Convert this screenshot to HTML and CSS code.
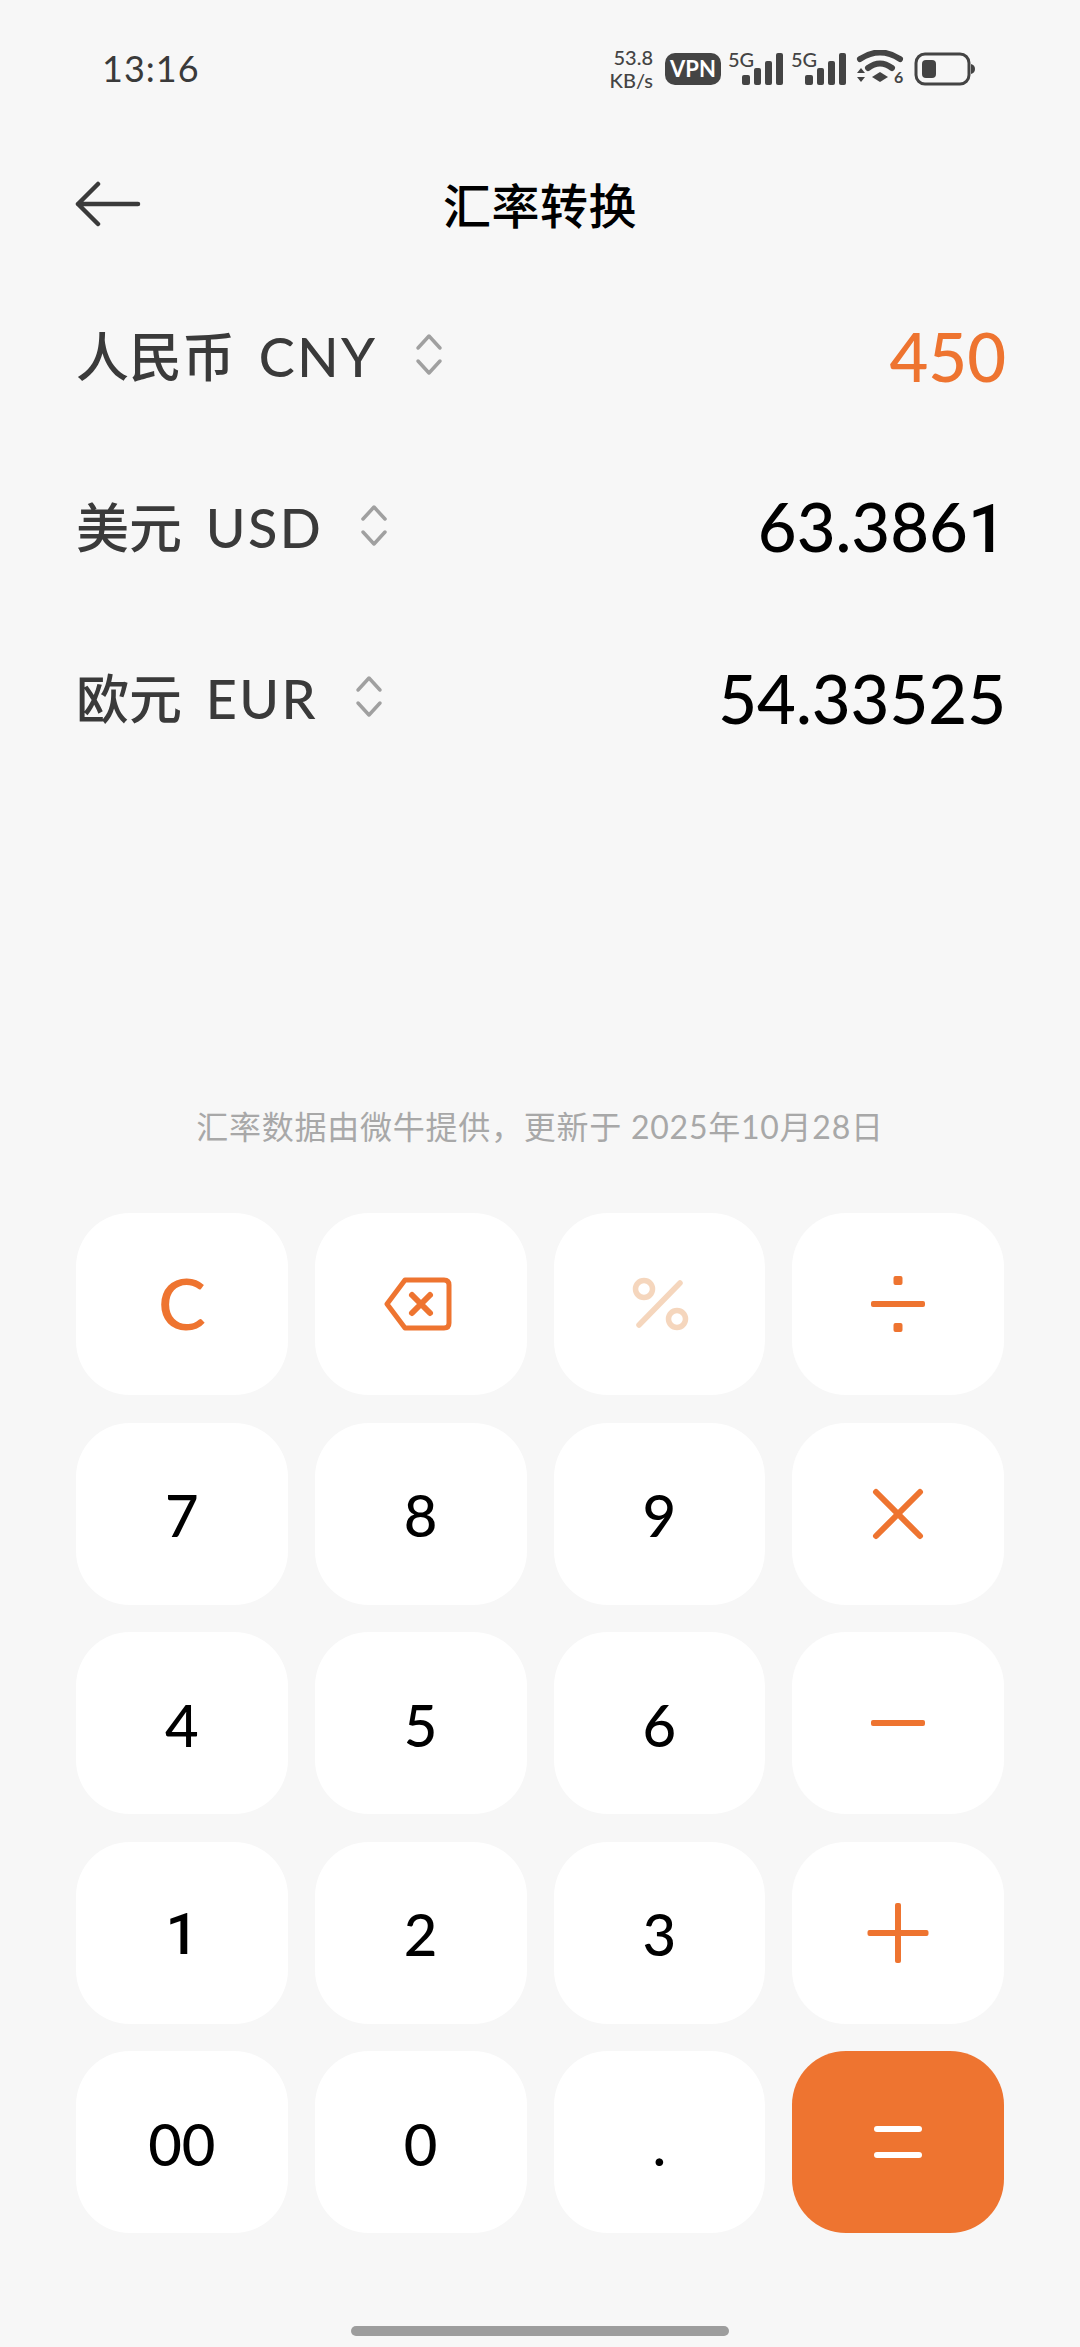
FILE: index.html
```html
<!DOCTYPE html>
<html lang="zh-CN">
<head>
<meta charset="UTF-8" />
<meta name="viewport" content="width=device-width, initial-scale=1.0"/>
<title>汇率转换</title>
<link rel="stylesheet" href="styles.css">
</head>
<body>

<div class="status-bar">
    <span class="time">13:16</span>
    <div class="status-icons">
        <div class="speed"><span>53.8</span><span>KB/s</span></div>
        <span class="vpn">VPN</span>
        <svg class="signal" width="56" height="44" viewBox="0 -6 56 44">
            <text class="signal-label" x="0" y="14">5G</text>
            <rect x="14" y="22" width="8" height="10" rx="2"/>
            <rect x="26" y="15" width="7" height="17" rx="2"/>
            <rect x="37" y="8" width="7" height="24" rx="2"/>
            <rect x="48" y="0" width="7" height="32" rx="2"/>
        </svg>
        <svg class="signal" width="56" height="44" viewBox="0 -6 56 44">
            <text class="signal-label" x="0" y="14">5G</text>
            <rect x="14" y="22" width="8" height="10" rx="2"/>
            <rect x="26" y="15" width="7" height="17" rx="2"/>
            <rect x="37" y="8" width="7" height="24" rx="2"/>
            <rect x="48" y="0" width="7" height="32" rx="2"/>
        </svg>
        <svg class="wifi" width="48" height="38" viewBox="0 0 48 38">
            <path d="M4 9 Q24 -4 44 9" fill="none" stroke="#444" stroke-width="6" stroke-linecap="round"/>
            <path d="M12 18 Q24 9 36 18" fill="none" stroke="#444" stroke-width="6" stroke-linecap="round"/>
            <path d="M16 27 L24 22 L32 27 L24 32 Z" fill="#444"/>
            <path d="M1 23 L5 18 L9 23 Z M1 27 L9 27 L5 32 Z" fill="#444"/>
            <text class="wifi-label" x="38" y="33">6</text>
        </svg>
        <svg class="battery" width="62" height="34" viewBox="0 0 62 34">
            <rect x="2" y="2" width="53" height="30" rx="9" fill="none" stroke="#444" stroke-width="3"/>
            <rect x="8" y="8" width="14" height="18" rx="4" fill="#444"/>
            <path d="M57 12 Q61 13 61 17 Q61 21 57 22 Z" fill="#444"/>
        </svg>
    </div>
</div>

<div class="header">
    <svg class="back" width="66" height="46" viewBox="0 0 66 46">
        <path d="M23 3 L3 23 L23 43 M3 23 H63"/>
    </svg>
    <h1>汇率转换</h1>
</div>

<div class="rates">
    <div class="rate-row">
        <div class="currency"><span><span class="name">人民币</span> <span class="code">CNY</span></span>
            <svg class="updown" width="28" height="44" viewBox="0 0 28 44"><path d="M3 16 L14 4 L25 16 M3 29 L14 41 L25 29"/></svg>
        </div>
        <span class="value active">450</span>
    </div>
    <div class="rate-row">
        <div class="currency"><span><span class="name">美元</span> <span class="code">USD</span></span>
            <svg class="updown" width="28" height="44" viewBox="0 0 28 44"><path d="M3 16 L14 4 L25 16 M3 29 L14 41 L25 29"/></svg>
        </div>
        <span class="value">63.386<span class="one">1</span></span>
    </div>
    <div class="rate-row">
        <div class="currency"><span><span class="name">欧元</span> <span class="code">EUR</span></span>
            <svg class="updown" width="28" height="44" viewBox="0 0 28 44"><path d="M3 16 L14 4 L25 16 M3 29 L14 41 L25 29"/></svg>
        </div>
        <span class="value">54.33525</span>
    </div>
</div>

<p class="note">汇率数据由微牛提供，更新于 2025年10月28日</p>

<div class="keypad">
    <button class="key op">C</button>
    <button class="key">
        <svg class="ico back-key" width="68" height="54" viewBox="0 0 68 54">
            <path d="M21 3 H60 Q65 3 65 8 V46 Q65 51 60 51 H21 L3 27 Z"/>
            <path d="M28 18 L46 36 M46 18 L28 36" stroke-width="6"/>
        </svg>
    </button>
    <button class="key">
        <svg class="ico pct" width="60" height="54" viewBox="0 0 60 54">
            <circle cx="13" cy="12" r="8.5"/>
            <circle cx="46" cy="42" r="8.5"/>
            <path d="M49 6 L8 48"/>
        </svg>
    </button>
    <button class="key">
        <svg class="ico" width="56" height="56" viewBox="0 0 56 56">
            <rect class="solid" x="1" y="25" width="54" height="6" rx="2"/>
            <rect class="solid" x="23.500" y="0" width="9" height="9" rx="2"/>
            <rect class="solid" x="23.500" y="47" width="9" height="9" rx="2"/>
        </svg>
    </button>

    <button class="key digit">7</button>
    <button class="key digit">8</button>
    <button class="key digit">9</button>
    <button class="key">
        <svg class="ico times" width="52" height="52" viewBox="0 0 52 52"><path d="M4 4 L48 48 M48 4 L4 48"/></svg>
    </button>

    <button class="key digit">4</button>
    <button class="key digit">5</button>
    <button class="key digit">6</button>
    <button class="key">
        <svg class="ico" width="56" height="8" viewBox="0 0 56 8"><rect class="solid" x="1" y="1" width="54" height="6" rx="2"/></svg>
    </button>

    <button class="key digit one">1</button>
    <button class="key digit">2</button>
    <button class="key digit">3</button>
    <button class="key">
        <svg class="ico" width="62" height="62" viewBox="0 0 62 62">
            <rect class="solid" x="0.500" y="28" width="61" height="6" rx="2"/>
            <rect class="solid" x="28" y="1" width="6" height="60" rx="2"/>
        </svg>
    </button>

    <button class="key digit">00</button>
    <button class="key digit">0</button>
    <button class="key digit">.</button>
    <button class="key equals">
        <svg class="ico" width="50" height="34" viewBox="0 0 50 34">
            <rect class="solid" x="1" y="1" width="48" height="6" rx="3"/>
            <rect class="solid" x="1" y="27" width="48" height="6" rx="3"/>
        </svg>
    </button>
</div>

<div class="home-bar"></div>

</body>
</html>
```

FILE: styles.css
```css
:root {
    --bg-color: #f7f7f7;
    --orange: #ee7430;
    --dark: #3a3a3a;
    --icon: #444;
    --latin: Lato, "Noto Sans CJK SC", sans-serif;
}

* {
    box-sizing: border-box;
}

body {
    margin: 0;
    height: 2347px;
    overflow: hidden;
    background: var(--bg-color);
    color: #000;
    font-family: var(--latin);
}

/* Status bar */
.status-bar {
    display: flex;
    align-items: center;
    justify-content: space-between;
    height: 138px;
    padding: 0 104px 0 102px;
}

.time {
    font-size: 36px;
    letter-spacing: 1px;
    color: var(--dark);
    padding-bottom: 2px;
}

.status-icons {
    display: flex;
    align-items: center;
    gap: 7px;
}

.speed {
    display: flex;
    flex-direction: column;
    align-items: flex-end;
    margin-right: 5px;
    font-size: 20px;
    font-weight: 500;
    line-height: 23px;
    color: var(--icon);
}

.vpn {
    width: 56px;
    height: 32px;
    border-radius: 10px;
    background: var(--icon);
    color: #fff;
    font-size: 22px;
    font-weight: 700;
    line-height: 32px;
    text-align: center;
}

.signal {
    fill: var(--icon);
}

.signal-label {
    font-size: 20px;
    font-weight: 500;
    fill: var(--icon);
}

.wifi {
    margin-left: 2px;
}

.wifi-label {
    font-size: 16px;
    font-weight: 700;
    fill: var(--icon);
}

.battery {
    margin-left: 3px;
}

/* Header */
.header {
    position: relative;
    display: flex;
    align-items: center;
    justify-content: center;
    height: 132px;
    padding-bottom: 3px;
}

.back {
    position: absolute;
    left: 75px;
    top: 43px;
    fill: none;
    stroke: var(--dark);
    stroke-width: 4.500;
    stroke-linecap: round;
    stroke-linejoin: round;
}

h1 {
    margin: 0;
    font-size: 48px;
    font-weight: 500;
    letter-spacing: 0.5px;
    font-family: "Noto Sans CJK SC", sans-serif;
}

/* Currency rows */
.rates {
    padding: 0 76px;
}

.rate-row {
    display: flex;
    align-items: center;
    justify-content: space-between;
    height: 171px;
}

.currency {
    display: flex;
    align-items: center;
    gap: 37px;
    font-size: 54px;
    font-weight: 500;
    word-spacing: 10px;
    color: var(--dark);
    white-space: pre;
    padding-bottom: 4px;
}

.currency .name {
    font-size: 53px;
}

.currency .code {
    letter-spacing: 2.500px;
}

.updown {
    fill: none;
    stroke: #a0a0a0;
    stroke-width: 3.500;
    stroke-linecap: round;
    stroke-linejoin: round;
}

.value {
    margin-right: -2px;
    font-size: 67px;
    font-weight: 500;
}

.value.active {
    color: var(--orange);
}

.one {
    font-family: Roboto, sans-serif;
}

.note {
    margin: 314px 0 0;
    height: 60px;
    font-size: 32px;
    letter-spacing: 0.750px;
    line-height: 60px;
    text-align: center;
    color: #a8a8a8;
}

/* Keypad */
.keypad {
    display: grid;
    grid-template-columns: repeat(4, 1fr);
    grid-auto-rows: 182px;
    gap: 27.500px 27px;
    margin-top: 56px;
    padding: 0 76px;
}

.key {
    display: flex;
    align-items: center;
    justify-content: center;
    padding: 0;
    border: none;
    border-radius: 54px;
    background: #fff;
    color: #000;
    font-family: var(--latin);
    font-size: 58px;
    font-weight: 500;
}

.key.digit {
    padding-top: 2px;
}

.key.one {
    font-family: Roboto, sans-serif;
}

.key.op {
    padding-bottom: 5px;
    color: var(--orange);
    font-size: 72px;
}

.key.equals {
    background: var(--orange);
}

.ico {
    fill: none;
    stroke: var(--orange);
    stroke-width: 5;
    stroke-linecap: round;
    stroke-linejoin: round;
}

.ico .solid {
    fill: var(--orange);
    stroke: none;
}

.equals .ico .solid {
    fill: #fff;
}

.ico.back-key {
    margin-right: 5px;
}

.ico.pct {
    margin-left: 4px;
    stroke: #f5d6bd;
    stroke-width: 5.500;
}

.ico.times {
    stroke-width: 6;
}

.home-bar {
    width: 378px;
    height: 10px;
    margin: 93px auto 0;
    border-radius: 5px;
    background: #9d9d9d;
}
```
